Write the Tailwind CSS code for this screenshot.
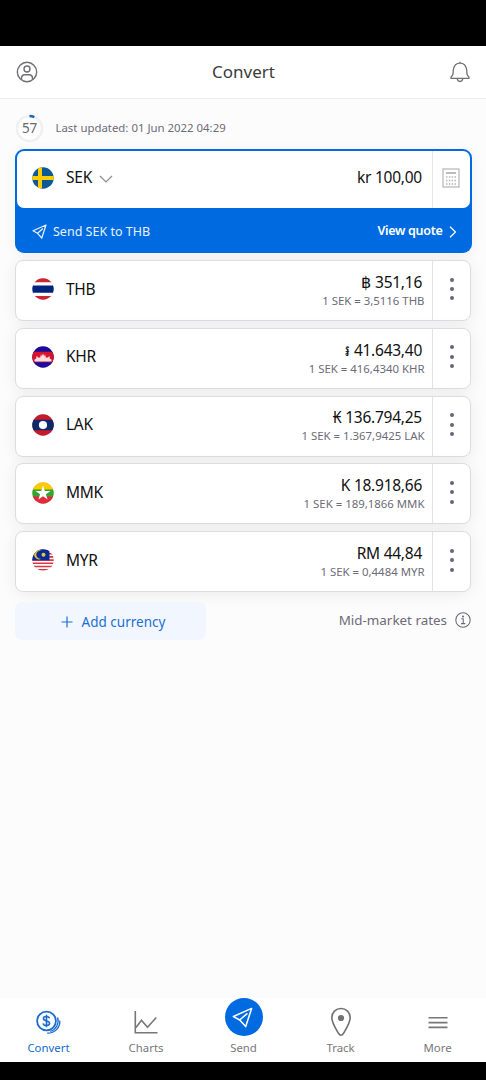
<!DOCTYPE html>
<html lang="en">
<head>
<meta charset="utf-8">
<title>Convert</title>
<script src="https://cdn.jsdelivr.net/npm/@tailwindcss/browser@4"></script>
</head>
<body class="bg-black">
<div class="flex h-[1080px] w-[486px] flex-col overflow-hidden bg-[#fcfcfd] font-['Noto_Sans','Open_Sans',sans-serif] text-[#111]">
  <div class="h-[46px] shrink-0 bg-black"></div>
  <header class="flex h-[53px] shrink-0 items-center justify-between border-b border-[#ececee] bg-white pl-4 pr-[15px]">
    <svg class="size-[22px]" viewBox="0 0 22 22" fill="none" stroke="#707074" stroke-width="1.4"><circle cx="11" cy="11" r="9.7"/><circle cx="11" cy="8" r="3"/><path d="M5.500 18.600v-1.300c0-2.200 1.400-3.600 3.500-3.600h4c2.100 0 3.500 1.400 3.500 3.600v1.300"/></svg>
    <h1 class="text-[17px] leading-6 text-[#3b3b3d]">Convert</h1>
    <svg class="size-[22px]" viewBox="0 0 22 22" fill="none" stroke="#707074" stroke-width="1.300" stroke-linejoin="round"><path d="M11 .8v1.400M2 17.300v-1.200l1.800-2.300c.5-2 .3-3.800.6-5.400C5 4.500 7.500 2.200 11 2.200s6 2.300 6.600 6.200c.3 1.600.1 3.400.6 5.400l1.800 2.300v1.200zM8.200 17.500c.2 1.900 1.300 3 2.800 3s2.600-1.100 2.800-3"/></svg>
  </header>

  <main class="flex flex-1 flex-col px-[15px] pt-[14px]">
    <div class="flex h-[30px] items-center gap-[11.500px]">
      <div class="relative flex size-[29px] items-center justify-center rounded-full text-[13.500px] tracking-[-0.300px] text-[#68686e]">
        <svg class="absolute inset-0 size-[29px]" viewBox="0 0 29 29" fill="none" stroke-width="2.600"><circle cx="14.500" cy="14.500" r="12.500" fill="#fff" stroke="#f0f0f1"/><path d="M14.500 2A12.500 12.500 0 0 1 19.300 3.100" stroke="#1766c4"/></svg>
        <span class="relative">57</span>
      </div>
      <span class="text-[11.400px] text-[#6c6b78]">Last updated: 01 Jun 2022 04:29</span>
    </div>

    <section class="mt-[6px] h-[104px] w-[456.500px] shrink-0 rounded-[9px] bg-[#006be0] p-[2px] shadow-[0_2px_14px_rgba(0,0,40,0.05)]">
      <div class="flex h-[57px] rounded-[7px] bg-white">
        <div class="flex flex-1 items-center pb-[4px] pl-[15px]">
          <svg class="size-[22px]" viewBox="0 0 22 22"><clipPath id="c0"><circle cx="11" cy="11" r="10.700"/></clipPath><g clip-path="url(#c0)"><path fill="#0b5a97" d="M0 0h22v22H0z"/><path fill="#fc0" d="M6 0h4v22H6zM0 9h22v4H0z"/></g></svg>
          <span class="ml-[12px] text-[15.500px] tracking-[-0.250px]">SEK</span>
          <svg class="ml-[7px] mt-[3px] h-[8px] w-[14px]" viewBox="0 0 14 8" fill="none" stroke="#8b8b91" stroke-width="1.200"><path d="M1 1l6 6 6-6"/></svg>
          <span class="ml-auto mr-[9.500px] text-[15.500px] tracking-[-0.250px]">kr 100,00</span>
        </div>
        <div class="flex w-[38px] items-center justify-center border-l border-[#e5e5ea] pb-[3px]">
          <svg class="h-[20px] w-[18px]" viewBox="0 0 18 20" fill="none" stroke="#b5b5b9"><rect x="1" y="1" width="16" height="18" stroke-width="1.200"/><path d="M4 5h10" stroke-width="1.800"/><path d="M4 9h10M4 12.500h10M4 16h10" stroke-width="1.500" stroke-dasharray="1.500 1.330"/></svg>
        </div>
      </div>
      <div class="flex h-[45px] items-center pl-[15px] pr-[13px] pt-[2px] text-white">
        <svg class="size-[15px]" viewBox="0 0 15 15" fill="none" stroke="#e8f2ff" stroke-width="1.200" stroke-linejoin="round"><path d="M14 1L1 6.800l4.500 2.500L9.800 14zM5.500 9.300L11 4.500"/></svg>
        <span class="ml-[6px] mt-[1px] text-[12.500px] text-[#e8f2ff]">Send SEK to THB</span>
        <span class="ml-auto text-[12.500px] font-semibold tracking-[-0.300px]">View quote</span>
        <svg class="ml-[6px] h-[12px] w-[8px]" viewBox="0 0 8 12" fill="none" stroke="#fff" stroke-width="1.200"><path d="M1 .7L6.500 6 1 11.300"/></svg>
      </div>
    </section>

    <ul id="rates" class="mt-[7px] flex w-[456px] flex-col gap-[6.800px]"></ul>

    <div class="mt-[10px] flex items-start justify-between">
      <button class="flex h-[38px] w-[191px] items-center justify-center gap-[9px] rounded-[7px] bg-[#f2f7ff] pl-[5px] pt-[1px] text-[13.500px] text-[#1a6fd4]">
        <svg class="size-[12px]" viewBox="0 0 12 12" stroke="#1a6fd4" stroke-width="1.200"><path d="M6 .5v11M.5 6h11"/></svg>
        Add currency
      </button>
      <div class="mt-[8.500px] flex items-center gap-[8px] text-[13.400px] leading-[18px] text-[#6c6b78]">Mid-market rates
        <svg class="size-[16px]" viewBox="0 0 16 16" fill="none" stroke="#6c6b78" stroke-width="1.100"><circle cx="8" cy="8" r="7.200"/><path d="M6.300 6.800H8.200V11.500M6 11.600h4.300"/><circle cx="8" cy="4.500" r=".5" fill="#6c6b78"/></svg>
      </div>
    </div>
  </main>

  <nav class="grid h-[64px] shrink-0 grid-cols-[97px_98px_97px_97px_97px] bg-white text-center text-[11.400px] leading-4 text-[#77777b]">
    <div class="flex flex-col items-center justify-between pb-[6px] pt-[12px] text-[#0f6ad0]">
      <svg class="mr-[2px] h-[25px] w-[26px]" viewBox="0 0 26 25" fill="none" stroke="#1a6bd0" stroke-width="1.800"><circle cx="11.500" cy="11" r="9.400"/><path stroke-width="1.600" d="M14.500 8.400c-.3-1.300-1.500-1.900-3.100-1.900-1.800 0-3 .8-3 2.100 0 3.200 6.200 1.400 6.200 4.700 0 1.400-1.200 2.200-3.200 2.200-1.800 0-3-.8-3.300-2.200M11.500 4.800v12.400"/><path d="M22.600 7.500c1.800 6-1.400 12-7.300 14M24.700 10.500c.8 6.500-4.500 12.800-12.500 12.700" stroke-width="1.300"/></svg>
      <span>Convert</span>
    </div>
    <div class="flex flex-col items-center justify-between pb-[6px] pt-[12px]">
      <svg class="h-[25px] w-[24px]" viewBox="0 0 24 25" fill="none" stroke="#77777b" stroke-width="1.600"><path d="M1.300 1v21.800H23.500M2 17.500l5.500-7.300 6 7L22.300 7.500"/></svg>
      <span>Charts</span>
    </div>
    <div class="flex flex-col items-center justify-between pb-[6px]">
      <div class="flex size-[38px] items-center justify-center rounded-full bg-[#006be0]">
        <svg class="mr-[3px] mt-[1px] size-[21px]" viewBox="0 0 15 15" fill="none" stroke="#fff" stroke-width="1.100" stroke-linejoin="round"><path d="M14 1L1 6.800l4.500 2.500L9.800 14zM5.500 9.300L11 4.500"/></svg>
      </div>
      <span>Send</span>
    </div>
    <div class="flex flex-col items-center justify-between pb-[6px] pt-[9px]">
      <svg class="h-[30px] w-[22px]" viewBox="0 0 22 30" fill="none" stroke="#717174" stroke-width="1.600"><path d="M11 1.500c5.200 0 9.200 3.900 9.200 9.200 0 4.800-3.500 10.300-6.500 15.300-1.800 3-3.600 3-5.400 0-3-5-6.500-10.500-6.500-15.300C1.800 5.400 5.800 1.500 11 1.500z"/><circle cx="11" cy="11" r="3.100" fill="#717174" stroke="none"/></svg>
      <span>Track</span>
    </div>
    <div class="flex flex-col items-center justify-between pb-[6px] pt-[18px]">
      <svg class="h-[13px] w-[20px]" viewBox="0 0 20 13" stroke="#77777b" stroke-width="1.600"><path d="M.5 1.800h19M.5 6.600h19M.5 11.400h19"/></svg>
      <span>More</span>
    </div>
  </nav>
  <div class="h-[18px] shrink-0 bg-black"></div>
</div>

<template id="row">
  <li class="flex h-[61px] rounded-[8px] border border-[#dddde1] bg-white shadow-[0_2px_16px_rgba(0,0,30,0.07)]">
    <div class="flex flex-1 items-center pb-[2.500px] pl-[16px]">
      <svg class="size-[22px]" viewBox="0 0 22 22"></svg>
      <span data-code class="ml-[12px] text-[15.500px] tracking-[-0.250px]"></span>
      <div class="ml-auto mr-[7.500px] flex flex-col items-end">
        <div class="mr-[2.500px] mt-[3px] text-[15.500px] leading-[20px] tracking-[-0.250px]"><span data-symbol></span> <span data-amount></span></div>
        <div data-rate class="text-[11.400px] leading-[18px] text-[#6c6b78]"></div>
      </div>
    </div>
    <div class="flex w-[38px] flex-col items-center justify-center gap-[5.400px] border-l border-[#e2e2e6] pb-[3px]">
      <i class="size-[4px] rounded-full bg-[#66657a]"></i><i class="size-[4px] rounded-full bg-[#66657a]"></i><i class="size-[4px] rounded-full bg-[#66657a]"></i>
    </div>
  </li>
</template>
<script>
const rows = [
  ['THB', '฿', '351,16', '3,5116', '<path fill="#fff" d="M0 0h22v22H0z"/><path fill="#d02432" d="M0 0h22v4.200H0zM0 18h22v4H0z"/><path fill="#00247d" d="M0 7.500h22v7.300H0z"/>'],
  ['KHR', '៛', '41.643,40', '416,4340', '<path fill="#1b0a9c" d="M0 0h22v22H0z"/><path fill="#d8142c" d="M0 5.800h22v10.500H0z"/><path fill="#f9dfe2" d="M2.500 15.500v-2l1.500-.8.800-3 1 1.500 1.200.5 1.300-.5.600-3 .900 2 1.200-2.700 1.200 2.700.9-2 .6 3 1.300.5 1.200-.5 1-1.500.8 3 1.500.8v2z"/>'],
  ['LAK', '₭', '136.794,25', '1.367,9425', '<path fill="#c9182b" d="M0 0h22v22H0z"/><path fill="#0b2a6b" d="M0 5.800h22v10.500H0z"/><circle cx="11" cy="11" r="4.100" fill="#fff"/>'],
  ['MMK', 'K', '18.918,66', '189,1866', '<path fill="#fecb00" d="M0 0h22v8H0z"/><path fill="#34a52f" d="M0 7.500h22v7.500H0z"/><path fill="#e3293a" d="M0 14.500h22V22H0z"/><path fill="#fff" d="M11 3.500l1.800 5.400h5.700l-4.600 3.300 1.700 5.400-4.600-3.300-4.600 3.300 1.700-5.400-4.600-3.300h5.700z"/>'],
  ['MYR', 'RM', '44,84', '0,4484', '<path fill="#fff" d="M0 0h22v22H0z"/><path stroke="#dc3545" stroke-width="1.600" d="M0 1.500h22M0 4.700h22M0 7.900h22M0 11.100h22M0 14.300h22M0 17.500h22M0 20.700h22"/><path fill="#0a2a96" d="M0 0h17.500v11.200H0z"/><path fill="#e8c832" d="M9.500 2a4 4 0 1 0 0 7.600 4.600 4.600 0 1 1 0-7.600z"/><circle cx="11.500" cy="5.800" r="2" fill="#e8c832"/>'],
];
const list = document.getElementById('rates');
rows.forEach(([code, symbol, amount, rate, flag], i) => {
  const li = document.getElementById('row').content.cloneNode(true);
  li.querySelector('svg').innerHTML = `<clipPath id="f${i}"><circle cx="11" cy="11" r="10.700"/></clipPath><g clip-path="url(#f${i})">${flag}</g><circle cx="11" cy="11" r="10.500" fill="none" stroke="#000" stroke-opacity=".12" stroke-width=".5"/>`;
  li.querySelector('[data-code]').textContent = code;
  li.querySelector('[data-symbol]').textContent = symbol;
  li.querySelector('[data-amount]').textContent = amount;
  li.querySelector('[data-rate]').textContent = `1 SEK = ${rate} ${code}`;
  list.append(li);
});
</script>
</body>
</html>
